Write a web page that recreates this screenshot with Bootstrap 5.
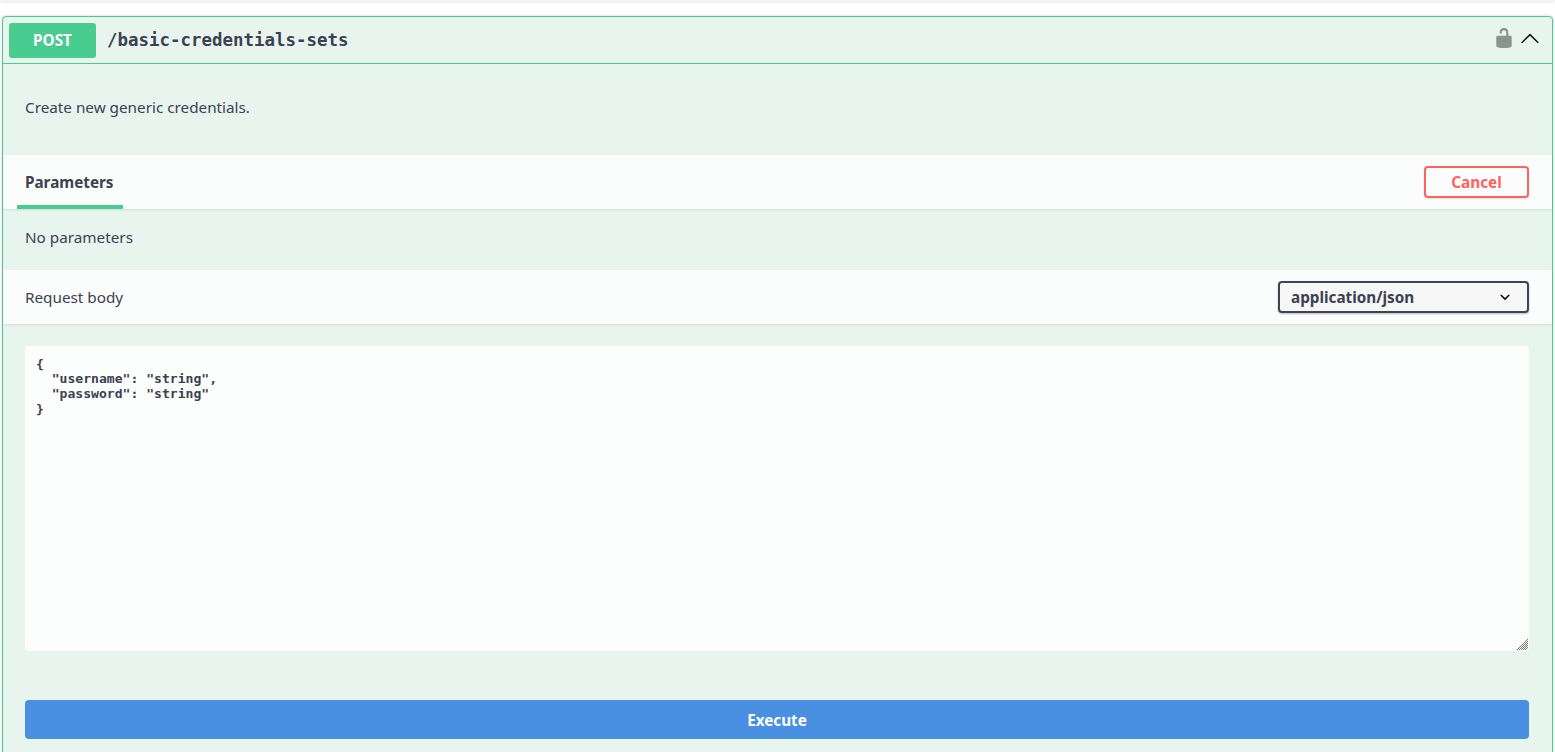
<!DOCTYPE html>
<html lang="en">
<head>
<meta charset="utf-8">
<title>POST /basic-credentials-sets</title>
<link href="https://cdn.jsdelivr.net/npm/bootstrap@5.3.0/dist/css/bootstrap.min.css" rel="stylesheet">
<style>
html,body{height:752px;overflow:hidden;background:#fff;}
body{font-family:"Noto Sans",sans-serif;color:#3b4151;font-size:15.27px;}
.topshade{height:1px;box-shadow:0 1px 3px rgba(0,0,0,.2);background:#f5f5f5;}
.opbox{margin:15px 2px 0;height:800px;background:#e8f5ef;border:1px solid #49cc90;border-radius:4px;box-shadow:0 0 3px rgba(0,0,0,.19);}
.ophead{height:47px;padding:0 6px;border-bottom:1px solid #49cc90;}
.verb{width:87px;height:35px;background:#49cc90;color:#fff;font-weight:700;font-size:15.27px;border-radius:3px;text-shadow:0 1px 0 rgba(0,0,0,.1);}
.oppath{font-family:"DejaVu Sans Mono",monospace;font-weight:700;font-size:17.45px;color:#3b4151;margin-left:11px;}
.lockic{margin-right:5px;margin-bottom:4px;}
.caretic{margin-right:6px;margin-bottom:4px;}
.descwrap{height:91px;padding:33px 22px 0;line-height:20px;}
.tabbar{height:54px;background:rgba(255,255,255,.8);box-shadow:0 1px 2px rgba(0,0,0,.1);padding:0 23px 0 14px;}
.tabitem{width:106px;height:54px;padding:0 8px;font-weight:700;line-height:54px;position:relative;}
.tabitem::after{content:"";position:absolute;left:0;right:0;bottom:0;height:4px;background:#49cc90;}
.cancelbtn{width:105px;height:32px;padding:0;border:2px solid #ff6060;border-radius:4px;background:transparent;color:#ff6060;font-weight:700;font-size:15.27px;box-shadow:0 1px 2px rgba(0,0,0,.1);line-height:26px;}
.noparams{height:61px;padding:0 22px 4px;}
.bodybar{height:54px;background:rgba(255,255,255,.8);box-shadow:0 1px 2px rgba(0,0,0,.1);padding:0 23px 0 22px;}
.mediasel{width:251px;height:32px;padding:0 40px 0 11px;border:2px solid #41444e;border-radius:4px;background:#f7f7f7 url("data:image/svg+xml,%3Csvg xmlns='http://www.w3.org/2000/svg' viewBox='0 0 20 20'%3E%3Cpath d='M13.418 7.859a.695.695 0 0 1 .978 0 .68.68 0 0 1 0 .969l-3.908 3.83a.697.697 0 0 1-.979 0l-3.908-3.83a.68.68 0 0 1 0-.969.695.695 0 0 1 .978 0L10 11z'/%3E%3C/svg%3E") right 12px center/20px no-repeat;color:#3b4151;font-family:"Noto Sans",sans-serif;font-weight:700;font-size:15.27px;appearance:none;box-shadow:0 1px 2px rgba(0,0,0,.25);}
.bodywrap{padding:22px 23px 0 22px;}
.bodyarea{display:block;width:100%;height:305px;padding:10px 10px 10px 11px;margin:0;border:0;outline:0;border-radius:4px;background:rgba(255,255,255,.85);color:#3b4151;font-family:"DejaVu Sans Mono",monospace;font-weight:600;font-size:13.09px;line-height:15px;resize:vertical;}
.bodyarea::-webkit-resizer{background:url("data:image/svg+xml,%3Csvg xmlns='http://www.w3.org/2000/svg' width='11' height='11' stroke='%23777' stroke-width='1'%3E%3Cpath d='M11 0L0 11M11 2L2 11M11 4L4 11M11 6L6 11M11 8L8 11'/%3E%3C/svg%3E") right 1px bottom 1px/11px 11px no-repeat;}
.execwrap{padding:49px 23px 0 22px;}
.execbtn{display:block;width:100%;height:39px;padding:1px 0 0;border:0;border-radius:4px;background:#4990e2;color:#fff;font-weight:700;font-size:15.27px;}
.execbtn:hover,.cancelbtn:hover{background:#4990e2;color:#fff;}
</style>
</head>
<body>
<div class="topshade"></div>
<div class="opbox">
  <div class="ophead d-flex align-items-center">
    <span class="verb d-inline-flex align-items-center justify-content-center">POST</span>
    <span class="oppath flex-grow-1">/basic-credentials-sets</span>
    <svg class="lockic" width="22" height="22" viewBox="0 0 20 20" fill="#8a9490" aria-hidden="true"><path d="M15.8 8H14V5.6C14 2.703 12.665 1 10 1 7.334 1 6 2.703 6 5.6V6h2v-.801C8 3.754 8.797 3 10 3c1.203 0 2 .754 2 2.199V8H4c-.553 0-1 .646-1 1.199V17c0 .549.428 1.139.951 1.307l1.197.387C5.672 18.861 6.55 19 7.1 19h5.8c.549 0 1.428-.139 1.951-.307l1.196-.387c.524-.167.953-.757.953-1.306V9.199C17 8.646 16.352 8 15.8 8z"/></svg>
    <svg class="caretic" width="20" height="20" viewBox="0 0 20 20" aria-hidden="true"><path d="M 17.418 14.908 C 17.69 15.176 18.127 15.176 18.397 14.908 C 18.667 14.64 18.668 14.207 18.397 13.939 L 10.489 6.109 C 10.219 5.841 9.782 5.841 9.51 6.109 L 1.602 13.939 C 1.332 14.207 1.332 14.64 1.602 14.908 C 1.873 15.176 2.311 15.176 2.581 14.908 L 10 7.767 Z" fill="#111"/></svg>
  </div>
  <div class="descwrap">Create new generic credentials.</div>
  <div class="tabbar d-flex align-items-center justify-content-between">
    <div class="tabitem">Parameters</div>
    <button type="button" class="btn cancelbtn">Cancel</button>
  </div>
  <div class="noparams d-flex align-items-center">No parameters</div>
  <div class="bodybar d-flex align-items-center justify-content-between">
    <span>Request body</span>
    <select class="mediasel" aria-label="Media type"><option>application/json</option></select>
  </div>
  <div class="bodywrap">
    <textarea class="bodyarea" spellcheck="false" aria-label="Request body">{
  "username": "string",
  "password": "string"
}</textarea>
  </div>
  <div class="execwrap">
    <button type="button" class="btn execbtn">Execute</button>
  </div>
</div>
<script src="https://cdn.jsdelivr.net/npm/bootstrap@5.3.0/dist/js/bootstrap.bundle.min.js"></script>
</body>
</html>
